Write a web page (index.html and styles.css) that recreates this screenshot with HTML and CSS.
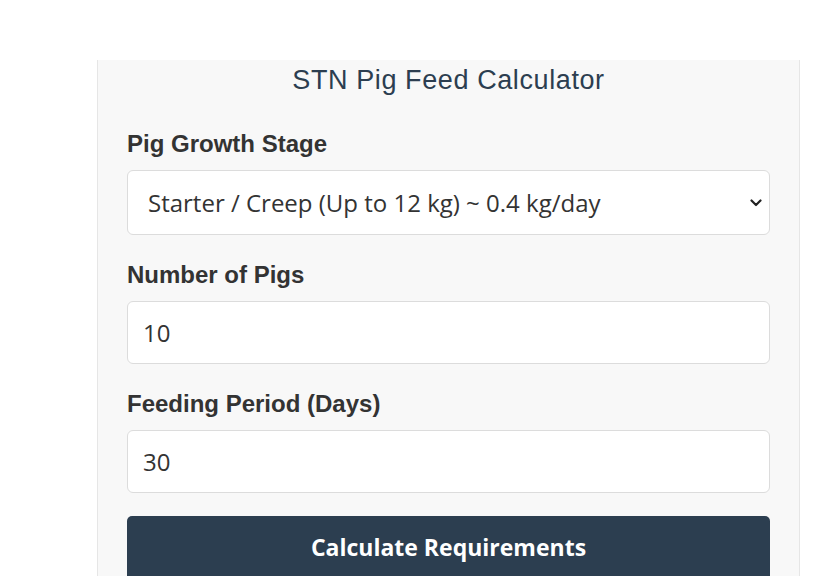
FILE: index.html
```html
<!DOCTYPE html>
<html lang="en">
<head>
    <meta charset="UTF-8"/>
    <title>STN Pig Feed Calculator</title>
    <link rel="stylesheet" href="styles.css">
</head>
<body>
<div class="page">
    <div class="calc-card">
        <h2 class="calc-title">STN Pig Feed Calculator</h2>

        <div class="calc-field">
            <label for="stage">Pig Growth Stage</label>
            <div class="select-wrap">
                <select id="stage">
                    <option>Starter / Creep (Up to 12 kg) ~ 0.4 kg/day</option>
                    <option>Grower (12 - 50 kg) ~ 1.5 kg/day</option>
                    <option>Finisher (50 - 100 kg) ~ 2.5 kg/day</option>
                </select>
                <svg class="select-arrow" width="12" height="8" viewBox="0 0 12 8">
                    <path d="M1.5 1.5 L6 6 L10.5 1.5" fill="none" stroke="#222" stroke-width="2.2" stroke-linecap="round" stroke-linejoin="round"/>
                </svg>
            </div>
        </div>

        <div class="calc-field">
            <label for="pigs">Number of Pigs</label>
            <input type="number" id="pigs" value="10"/>
        </div>

        <div class="calc-field">
            <label for="days">Feeding Period (Days)</label>
            <input type="number" id="days" value="30"/>
        </div>

        <button class="calc-button" type="button">Calculate Requirements</button>
    </div>
</div>
</body>
</html>
```

FILE: styles.css
```css
* {
    margin: 0;
    padding: 0;
    box-sizing: border-box;
}

body {
    background-color: #fff;
    font-family: "Liberation Sans", Arial, sans-serif;
    color: #333;
}

.page {
    padding: 60px 40px 0 97px;
}

.calc-card {
    height: 516px;
    overflow: hidden;
    padding: 4px 29px 0 29px;
    background-color: #f8f8f8;
    border-left: 1px solid #e6e6e6;
    border-right: 1px solid #e6e6e6;
}

.calc-title {
    text-align: center;
    font-size: 27px;
    line-height: 32px;
    letter-spacing: 0.6px;
    font-weight: normal;
    color: #2c3e50;
    margin-bottom: 34px;
}

.calc-field + .calc-field {
    margin-top: 26px;
}

.calc-field label {
    display: block;
    font-size: 24px;
    line-height: 28px;
    font-weight: bold;
    color: #333;
    margin-bottom: 12px;
}

.calc-field input,
.calc-field select {
    display: block;
    width: 100%;
    height: 63px;
    padding: 0 15px;
    font-family: "Open Sans", "Noto Sans", sans-serif;
    font-size: 24px;
    color: #333;
    background-color: #fff;
    border: 1px solid #dcdcdc;
    border-radius: 6px;
    outline: none;
}

.calc-field input::-webkit-outer-spin-button,
.calc-field input::-webkit-inner-spin-button {
    -webkit-appearance: none;
    margin: 0;
}

.select-wrap {
    position: relative;
}

.calc-field select {
    height: 65px;
    padding-left: 20px;
    -webkit-appearance: none;
    appearance: none;
}

.select-arrow {
    position: absolute;
    right: 8px;
    top: 29px;
    pointer-events: none;
}

.calc-button {
    display: block;
    width: 100%;
    height: 61px;
    margin-top: 23px;
    border: none;
    border-radius: 5px 5px 0 0;
    background-color: #2c3e50;
    color: #fff;
    font-family: "Open Sans", "Noto Sans", sans-serif;
    font-size: 23px;
    font-weight: bold;
    cursor: pointer;
}
```
